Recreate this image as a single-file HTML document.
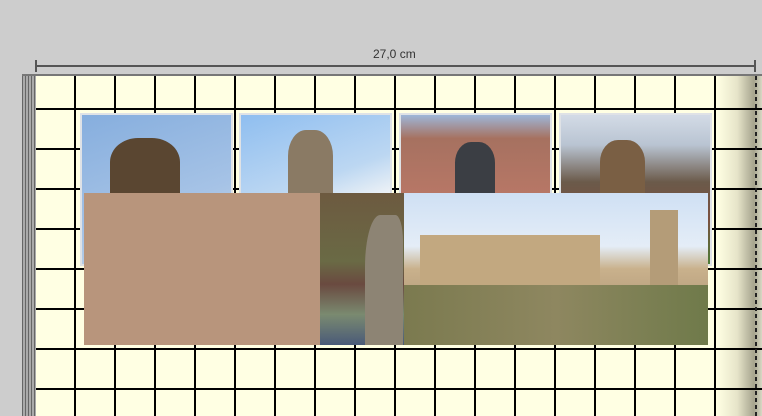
<!DOCTYPE html>
<html><head><meta charset="utf-8"><style>
*{margin:0;padding:0;box-sizing:border-box}
body{width:762px;height:416px;background:#cdcdcd;position:relative;overflow:hidden;font-family:"Liberation Sans",sans-serif}
.abs{position:absolute}
.photo{border:2px solid #dfe2e6}
</style></head><body>
<div class="abs" style="left:373px;top:47px;font-size:12px;color:#333">27,0 cm</div>
<div class="abs" style="left:36px;top:65px;width:720px;height:2px;background:#555"></div>
<div class="abs" style="left:35px;top:60px;width:2px;height:12px;background:#555"></div>
<div class="abs" style="left:754px;top:60px;width:2px;height:12px;background:#555"></div>
<div class="abs" style="left:22px;top:74px;width:740px;height:2px;background:#777"></div>
<div class="abs" style="left:22px;top:76px;width:14px;height:340px;background:repeating-linear-gradient(to right,#666 0,#666 1px,#aaa 1px,#aaa 3px)"></div>
<div class="abs" style="left:36px;top:76px;width:726px;height:340px;background:#ffffe3"></div>
<div class="abs" style="left:717px;top:76px;width:45px;height:340px;background:linear-gradient(to right,#ffffe3 0,#e6e4c9 45%,#a6a48e 82%,#d8d8c4 100%)"></div>
<div class="abs" style="left:36px;top:76px;width:681px;height:340px;background:linear-gradient(to right,#000 0,#000 2px,transparent 2px);background-size:40px 40px;background-position:38px 0"></div>
<div class="abs" style="left:36px;top:76px;width:726px;height:340px;background:linear-gradient(to bottom,#000 0,#000 2px,transparent 2px);background-size:40px 40px;background-position:0 32px"></div>
<div class="abs" style="left:755px;top:76px;width:2px;height:340px;background:repeating-linear-gradient(to bottom,#222 0,#222 4px,transparent 4px,transparent 7px)"></div>

<div class="abs photo" style="left:80px;top:113px;width:153px;height:153px;background:linear-gradient(160deg,#86aede,#a6c3e6 60%,#cfdbe8)"></div>
<div class="abs" style="left:110px;top:138px;width:70px;height:60px;background:#5a4631;border-radius:40% 40% 0 0"></div>
<div class="abs photo" style="left:239px;top:113px;width:153px;height:82px;background:linear-gradient(160deg,#8fbef0,#bcd7f2 70%,#eef2f6)"></div>
<div class="abs" style="left:288px;top:130px;width:45px;height:65px;background:#8a7a64;border-radius:40% 40% 0 0"></div>
<div class="abs photo" style="left:399px;top:113px;width:153px;height:82px;background:linear-gradient(#9eb6d8 0,#a67160 30%,#b77766 100%)"></div>
<div class="abs" style="left:455px;top:142px;width:40px;height:52px;background:#3b3e44;border-radius:40% 40% 0 0"></div>
<div class="abs photo" style="left:559px;top:113px;width:153px;height:153px;background:linear-gradient(#d3dbe6 0,#b9c4d2 20%,#6b5a4a 45%,#7a5040 70%,#4c7a35 100%)"></div>
<div class="abs" style="left:600px;top:140px;width:45px;height:55px;background:#7a5f44;border-radius:40% 40% 0 0"></div>

<div class="abs" style="left:84px;top:193px;width:236px;height:152px;background:#b8957c"></div>
<div class="abs" style="left:320px;top:193px;width:84px;height:152px;background:linear-gradient(#6d5a40 0,#6a6a45 45%,#6a4a40 60%,#7a8a70 80%,#4a5a78 100%)"></div>
<div class="abs" style="left:365px;top:215px;width:38px;height:130px;background:#8d8474;border-radius:40% 20% 0 0"></div>
<div class="abs" style="left:404px;top:193px;width:304px;height:152px;background:linear-gradient(#cfe0f4 0,#e4edf7 35%,#c9b18c 50%,#b9a07e 70%,#8a7a55 85%,#6c6a4c 100%)"></div>
<div class="abs" style="left:420px;top:235px;width:180px;height:75px;background:#c2a880"></div>
<div class="abs" style="left:650px;top:210px;width:28px;height:100px;background:#b49c78"></div>
<div class="abs" style="left:404px;top:285px;width:304px;height:60px;background:linear-gradient(90deg,#7b7a4f,#8e8760 50%,#6f7a4a)"></div>
</body></html>
